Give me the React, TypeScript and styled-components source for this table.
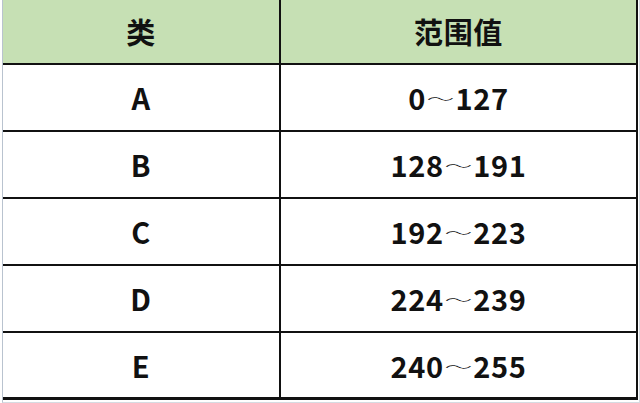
import styled, { createGlobalStyle } from 'styled-components';

const GlobalStyle = createGlobalStyle`
  html, body {
    margin: 0;
    padding: 0;
    background: #ffffff;
  }
  body {
    font-family: "Noto Sans CJK SC", "Noto Sans", sans-serif;
    color: #111111;
  }
`;

const Page = styled.div`
  width: 640px;
  height: 403px;
  overflow: hidden;
  background: #ffffff;
`;

const Frame = styled.div`
  width: 635px;
  margin-left: 2px;
  border-left: 1px solid #b9c3cf;
  border-right: 1px solid #d6dbe2;
  border-bottom: 1px solid #d6dbe2;
  padding-right: 1px;
  padding-bottom: 2px;
`;

const Table = styled.div`
  display: grid;
  grid-template-columns: 278px 1fr;
  border-right: 2px solid #111111;
`;

const Cell = styled.div<{ $head?: boolean; $first?: boolean; $last?: boolean }>`
  display: flex;
  align-items: center;
  justify-content: center;
  height: ${({ $head, $last }) => ($head ? '63px' : $last ? '64px' : '65px')};
  background: ${({ $head }) => ($head ? '#c6e0b4' : '#ffffff')};
  border-bottom: ${({ $last }) => ($last ? '3px' : '2px')} solid #111111;
  border-right: ${({ $first }) => ($first ? '2px solid #111111' : 'none')};
  font-size: 29px;
  font-weight: 700;
  letter-spacing: 0.6px;
  line-height: 1;
  box-sizing: content-box;
`;

const Wave = styled.span`
  display: inline-block;
  font-weight: 300;
  font-size: 25px;
  margin: 0 2px;
  transform: translateY(1px) scale(1.1, 0.55);
`;

const rows = [
  ['A', '0', '127'],
  ['B', '128', '191'],
  ['C', '192', '223'],
  ['D', '224', '239'],
  ['E', '240', '255'],
];

const App = () => {
  return (
    <Page>
      <GlobalStyle />
      <Frame>
        <Table>
          <Cell $head $first>类</Cell>
          <Cell $head>范围值</Cell>
          {rows.map(([cls, from, to], i) => {
            const last = i === rows.length - 1;
            return [
              <Cell key={cls + 'c'} $first $last={last}>
                {cls}
              </Cell>,
              <Cell key={cls + 'r'} $last={last}>
                {from}
                <Wave>～</Wave>
                {to}
              </Cell>,
            ];
          })}
        </Table>
      </Frame>
    </Page>
  );
};

export default App;
